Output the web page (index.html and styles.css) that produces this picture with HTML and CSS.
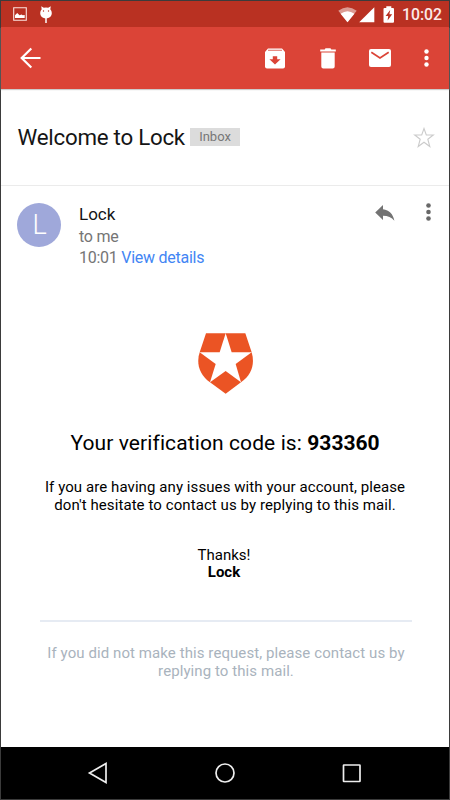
FILE: index.html
```html
<!DOCTYPE html>
<html lang="en">
<head>
<meta charset="utf-8">
<title>Welcome to Lock</title>
<link rel="stylesheet" href="styles.css">
</head>
<body>
<div class="phone">
  <header class="status">
    <svg class="picture" width="14" height="14" viewBox="0 0 14 14"><path d="M.7.7h12.6v12.6H.7z" fill="none" stroke="#fbe3df" stroke-width="1.1"/><path d="M2 11V8.3L4.2 6 6.6 8.2 8.5 7.4 9.7 8.3 11.7 8V11z" fill="#fff"/></svg>
    <svg class="debug" width="12" height="18" viewBox="0 0 12 18"><path d="M1.200.3 3.800 1.800Q6 1 8.200 1.800L10.800.3 10.300 3.200Q11.800 4.800 11.800 7C11.800 10.300 9.200 12.400 6 12.400S.2 10.300.2 7Q.2 4.800 1.700 3.200Z" fill="#fff"/><path d="M6 12v5" stroke="#fff" stroke-width="1.500"/><circle cx="3.500" cy="5" r=".7" fill="#b93122"/><circle cx="8.500" cy="5" r=".7" fill="#b93122"/></svg>
    <span class="spacer"></span>
    <svg class="wifi" width="19" height="16" viewBox="0 0 19 16"><path d="M9.500 15.300.3 3.800Q9.500-3.200 18.700 3.800Z" fill="#dc9b93"/><path d="M9.500 15.300 2.600 6.700Q9.500 1.700 16.400 6.700Z" fill="#fff"/></svg>
    <svg class="signal" width="16" height="16" viewBox="0 0 16 16"><path d="M15.300.3V15.300H.2z" fill="#fff"/></svg>
    <svg class="battery" width="12" height="17" viewBox="0 0 12 17"><path d="M3.300.3H8.300V2H10Q11 2 11 3V15.700Q11 16.700 10 16.700H1.500Q.5 16.700.5 15.700V3Q.5 2 1.500 2H3.300z" fill="#fff"/><path d="M7.200 4 2.600 10H5.200L4.600 14.500 9.200 8.300H6.400z" fill="#b93122"/></svg>
    <span class="clock">10:02</span>
  </header>
  <nav class="appbar">
    <svg class="back" width="21" height="22" viewBox="0 0 21 22"><path d="M20.500 11H2M11.300 1.500 1.700 11l9.600 9.500" fill="none" stroke="#fff" stroke-width="2.200"/></svg>
    <span class="spacer"></span>
    <svg class="archive" width="20" height="21" viewBox="0 0 20 21"><path d="M3 .5H17L20 4V18.500Q20 20.500 18 20.500H2Q0 20.500 0 18.500V4Z" fill="#fff"/><path d="M3 2.300H17" stroke="#e58178" stroke-width="1.200"/><path d="M7.800 8.300h4.400v3h3.400L10 16.500 4.400 11.300h3.400z" fill="#db4437"/></svg>
    <svg class="trash" width="16" height="21" viewBox="0 0 16 21"><path d="M.2 1.500H4.700L5.500.3h5l.8 1.200h4.500V3.500H.2zM1.300 4.500H14.700V18.500Q14.700 20.500 12.700 20.500H3.300Q1.300 20.500 1.300 18.500z" fill="#fff"/></svg>
    <svg class="mail" width="22" height="18" viewBox="0 0 22 18"><rect width="22" height="18" rx="2" fill="#fff"/><path d="M2.300 3.300 11 9 19.700 3.300" fill="none" stroke="#db4437" stroke-width="1.700"/></svg>
    <svg class="more" width="5" height="18" viewBox="0 0 5 18" fill="#fff"><circle cx="2.500" cy="2.500" r="2.200"/><circle cx="2.500" cy="9" r="2.200"/><circle cx="2.500" cy="15.500" r="2.200"/></svg>
  </nav>
  <section class="subject">
    <h1>Welcome to Lock</h1>
    <span class="label">Inbox</span>
    <span class="spacer"></span>
    <svg width="22" height="21" viewBox="0 0 22 21"><path d="M11 1.500 13.300 8H20.300L14.800 12.200 16.800 19.500 11 15.200 5.200 19.500 7.200 12.200 1.700 8H8.700z" fill="none" stroke="#cbcbcb" stroke-width="1.100"/></svg>
  </section>
  <section class="sender">
    <div class="avatar">L</div>
    <div class="meta">
      <div class="name">Lock</div>
      <div class="to">to me</div>
      <div class="time">10:01 <a>View details</a></div>
    </div>
    <span class="spacer"></span>
    <svg class="reply" width="20" height="16" viewBox="0 0 20 16"><path d="M8 0V4.300C14.300 5 18 9 19.400 15.700 16.500 12.300 13 10.700 8 10.700V15L.2 7.500z" fill="#737373"/></svg>
    <svg class="more" width="5" height="18" viewBox="0 0 5 18" fill="#686868"><circle cx="2.500" cy="2.500" r="2.300"/><circle cx="2.500" cy="9" r="2.300"/><circle cx="2.500" cy="15.500" r="2.300"/></svg>
  </section>
  <main class="message">
    <svg class="logo" width="55" height="61" viewBox="54 39 165 183" fill="#eb5424"><path d="M78 40H137L119 97H59Z"/><path d="M137 40H196L215 97H155Z"/><path d="M59 97 107 132 90 187C58 164 48 130 59 97Z"/><path d="M215 97 167 132 183 187C216 164 225 130 215 97Z"/><path d="M137 153 183 187 137 221 90 187Z"/></svg>
    <h2>Your verification code is: <b>933360</b></h2>
    <p class="help">If you are having any issues with your account, please<br>don't hesitate to contact us by replying to this mail.</p>
    <p class="thanks">Thanks!<br><b>Lock</b></p>
    <p class="notice">If you did not make this request, please contact us by<br>replying to this mail.</p>
  </main>
  <footer class="keys">
    <svg width="22" height="22" viewBox="0 0 22 22"><path d="M19 1.500V20.500L2.500 11z"/></svg>
    <svg width="22" height="22" viewBox="0 0 22 22"><circle cx="11" cy="11" r="9"/></svg>
    <svg width="22" height="22" viewBox="0 0 22 22"><rect x="3.500" y="3" width="16.500" height="16.500" rx=".5"/></svg>
  </footer>
</div>
</body>
</html>
```
FILE: styles.css
```css
* { box-sizing: border-box; }
body { margin: 0; font-family: Roboto, sans-serif; }
svg { display: block; flex: none; }
h1, h2, p { margin: 0; font-weight: 400; white-space: nowrap; }
.phone { width: 450px; height: 800px; border: 1px solid #3b3b3b; background: #fff; display: flex; flex-direction: column; }
.spacer { flex: 1; }
.status { height: 26px; flex: none; background: #b93122; display: flex; align-items: flex-start; padding: 6px 8px 0 12px; }
.debug { margin: -1px 0 0 13px; }
.wifi { margin-right: 2px; }
.signal { margin-right: 8px; }
.battery { margin: -1px 7px 0 0; }
.clock { color: #fbeae8; font-size: 15.8px; line-height: 16px; font-weight: 500; width: 39px; white-space: nowrap; }
.appbar { height: 62px; flex: none; background: #db4437; display: flex; align-items: center; padding: 0 20.500px 0 19px; box-shadow: 0 1px 1px #ccc; }
.archive { margin-right: 34.500px; }
.trash { margin-right: 33.500px; }
.mail { margin-right: 32.500px; }
.subject { height: 97px; flex: none; border-bottom: 1px solid #ebebeb; display: flex; align-items: center; padding: 0 14px 0 16.500px; }
.subject h1 { font-size: 22.300px; line-height: 28px; letter-spacing: -.24px; color: #151515; width: 168px; }
.label { margin-left: 4.500px; width: 50px; height: 18px; background: #dcdcdc; color: #777; font-size: 13px; line-height: 18px; text-align: center; }
.sender { height: 147px; flex: none; display: flex; align-items: flex-start; padding: 17px 18px 0 16px; }
.avatar { width: 44px; height: 44px; border-radius: 50%; background: #9fa8da; color: #fff; font-size: 27px; line-height: 45px; padding-left: 1px; font-weight: 300; text-align: center; }
.meta { margin-left: 18px; font-size: 16px; line-height: 21px; letter-spacing: -.26px; color: #757575; white-space: nowrap; }
.name { color: #151515; font-size: 17px; line-height: 22.500px; letter-spacing: 0; }
.meta a { color: #4285f4; }
.reply { margin: 2px 31px 0 0; }
.message { flex: 1; display: flex; flex-direction: column; align-items: center; text-align: center; }
.message h2 { font-size: 21px; line-height: 26px; margin-top: 36px; letter-spacing: .1px; }
.message h2 b { letter-spacing: 0; }
.message p { font-size: 15px; line-height: 17.500px; letter-spacing: .08px; }
.help { margin-top: 23px; }
.message .thanks { margin-top: 32.500px; padding-right: 2px; letter-spacing: 0; }
.message .notice { margin: 38.500px 0 0 2px; width: 372px; border-top: 2px solid #e6ebf3; padding-top: 23px; color: #a9b3bd; }
.keys { height: 52px; flex: none; background: #000; display: flex; justify-content: space-between; padding: 15px 87px 0 86px; }
.keys svg { fill: none; stroke: #eee; stroke-width: 1.700; }
```
